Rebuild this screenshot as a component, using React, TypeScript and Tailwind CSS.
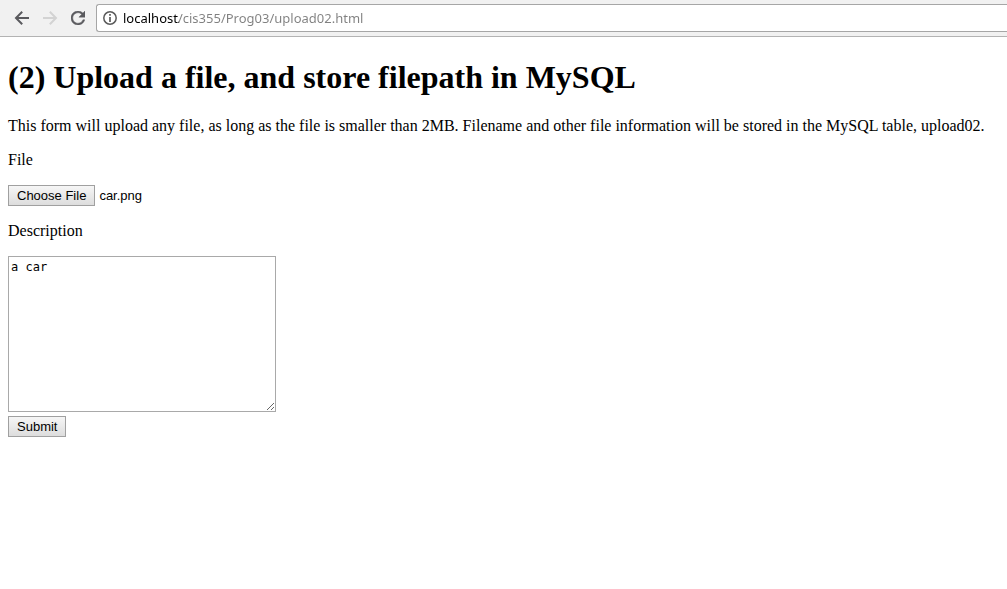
import { useEffect, useRef } from "react";

function BrowserBar() {
  return (
    <header className="flex h-[37px] items-center border-b border-[#b3b3b3] bg-[#f1f1f1] pl-2 font-['Noto_Sans',sans-serif]">
      <nav className="flex" aria-label="Browser">
        <button type="button" aria-label="Back" className="flex size-7 items-center justify-center text-[#5a5a5e]">
          <svg viewBox="0 0 16 16" className="size-4" fill="none" stroke="currentColor" strokeWidth="2">
            <path d="M15 8H2.5M8.2 1.8 2 8l6.2 6.2" />
          </svg>
        </button>
        <button type="button" aria-label="Forward" disabled className="flex size-7 items-center justify-center text-[#d3d3d3]">
          <svg viewBox="0 0 16 16" className="size-4" fill="none" stroke="currentColor" strokeWidth="2">
            <path d="M1 8h12.5M7.8 1.8 14 8l-6.2 6.2" />
          </svg>
        </button>
        <button type="button" aria-label="Reload" className="flex size-7 items-center justify-center text-[#5a5a5e]">
          <svg viewBox="4 4 16 16" className="size-3.5" fill="currentColor" stroke="currentColor" strokeWidth="0.5">
            <path d="M17.65 6.35A7.958 7.958 0 0 0 12 4c-4.42 0-7.99 3.58-7.99 8s3.57 8 7.99 8c3.73 0 6.84-2.55 7.73-6h-2.08A5.99 5.99 0 0 1 12 18c-3.31 0-6-2.69-6-6s2.69-6 6-6c1.66 0 3.14.69 4.22 1.78L13 11h7V4l-2.35 2.35z" />
          </svg>
        </button>
      </nav>
      <div className="ml-1 flex h-7 min-w-0 flex-1 items-center rounded-l-[3px] border border-r-0 border-[#a6a6a6] bg-white pl-1.5">
        <svg viewBox="0 0 14 14" className="size-3.5 shrink-0" fill="none" aria-hidden="true">
          <circle cx="7" cy="7" r="6.2" stroke="#5a5a5a" strokeWidth="1.5" />
          <path d="M7 3v1.7M7 6v5" stroke="#5a5a5a" strokeWidth="1.7" />
        </svg>
        <input
          type="text"
          aria-label="Address"
          defaultValue="localhost/cis355/Prog03/upload02.html"
          className="ml-1.5 h-6 min-w-0 flex-1 bg-[linear-gradient(to_right,#000_56px,#808080_56px)] bg-clip-text text-[13px] text-transparent caret-black outline-none"
        />
      </div>
    </header>
  );
}

export default function App() {
  const fileInput = useRef<HTMLInputElement>(null);

  useEffect(() => {
    const transfer = new DataTransfer();
    transfer.items.add(new File([""], "car.png", { type: "image/png" }));
    if (fileInput.current) fileInput.current.files = transfer.files;
  }, []);

  return (
    <div className="min-h-screen bg-white text-black">
      <BrowserBar />
      <main className="px-2 pt-[22px] font-['Liberation_Serif',serif] text-[16px] leading-[18px]">
        <h1 className="text-[32px] leading-[37px] font-bold">(2) Upload a file, and store filepath in MySQL</h1>
        <p className="mt-[21px]">
          This form will upload any file, as long as the file is smaller than 2MB. Filename and other file information will be
          stored in the MySQL table, upload02.
        </p>
        <form className="mt-4 flex flex-col items-start" onSubmit={(event) => event.preventDefault()}>
          <label htmlFor="file">File</label>
          <input
            ref={fileInput}
            id="file"
            type="file"
            className="mt-4 h-[21px] font-['Liberation_Sans',sans-serif] text-[13px] leading-[21px] file:me-1 file:h-[21px] file:border file:border-solid file:border-[#a0a0a0] file:bg-linear-to-b file:from-[#f6f6f6] file:to-[#dddddd] file:px-2 file:text-[13px] file:leading-[19px] file:text-black"
          />
          <label htmlFor="description" className="mt-4">
            Description
          </label>
          <textarea
            id="description"
            defaultValue="a car"
            className="mt-4 h-[156px] w-[268px] resize border border-[#a9a9a9] bg-white p-0.5 font-['DejaVu_Sans_Mono',monospace] text-[12px] leading-[17px] outline-none"
          />
          <button
            type="submit"
            className="mt-1 h-[21px] border border-[#a0a0a0] bg-linear-to-b from-[#f6f6f6] to-[#dddddd] px-2 font-['Liberation_Sans',sans-serif] text-[13px] leading-[19px] text-black"
          >
            Submit
          </button>
        </form>
      </main>
    </div>
  );
}
